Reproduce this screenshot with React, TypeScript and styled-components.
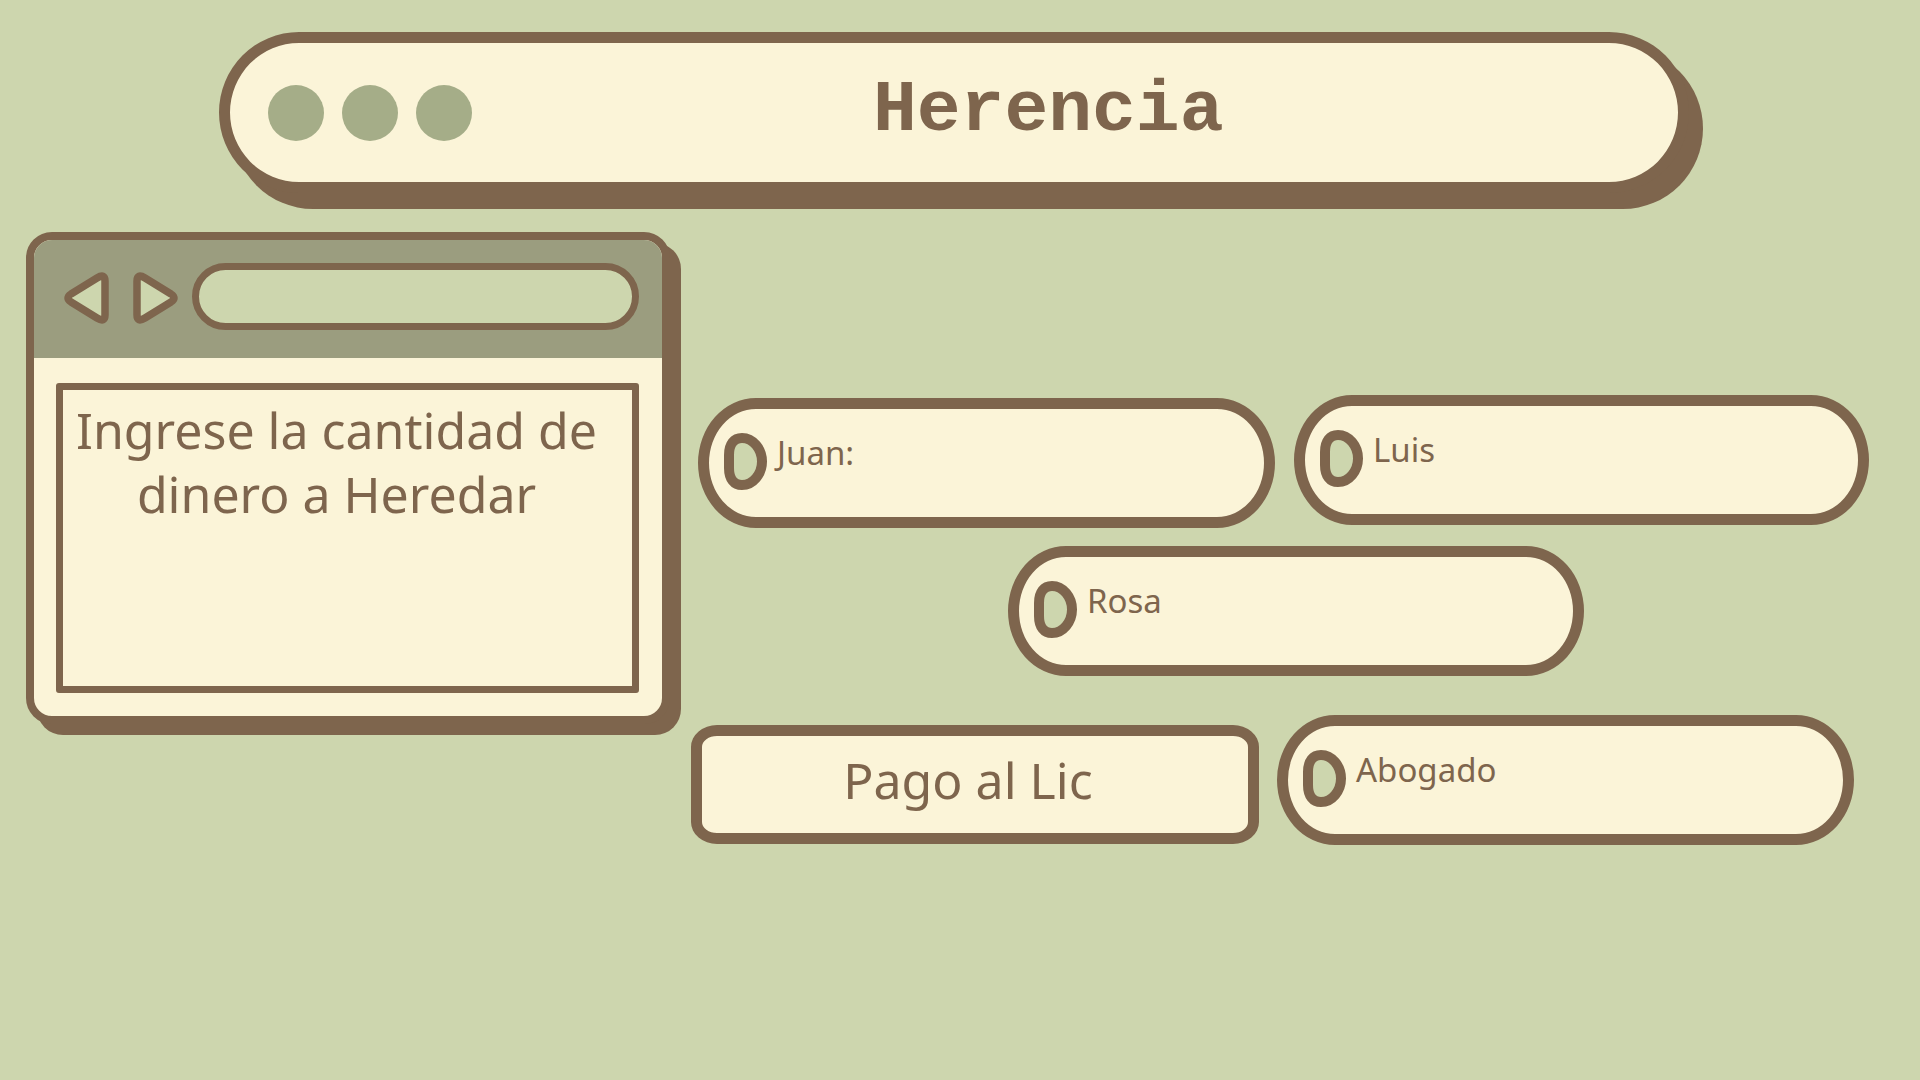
import React from "react";
import styled, { createGlobalStyle } from "styled-components";

const BG = "#cdd6ae";
const BROWN = "#7e654d";
const CREAM = "#fbf4d8";
const DOT = "#a5ad88";
const BAR = "#9b9d7f";

const Global = createGlobalStyle`
  html, body { margin: 0; padding: 0; background: ${BG}; }
  body { font-family: "Noto Sans", "DejaVu Sans", sans-serif; color: ${BROWN}; }
  * { box-sizing: border-box; }
`;

const Page = styled.div`
  width: 1920px;
  height: 1080px;
  overflow: hidden;
  background: ${BG};
  padding-top: 32px;
`;

const TitleBar = styled.header`
  margin-left: 219px;
  width: 1470px;
  height: 161px;
  border: 11px solid ${BROWN};
  border-radius: 80px / 50%;
  background: ${CREAM};
  box-shadow: 14px 16px 0 ${BROWN};
  display: flex;
  align-items: center;
  padding-left: 38px;
`;

const Dots = styled.div`
  display: flex;
  gap: 18px;
`;

const Dot = styled.span`
  width: 56px;
  height: 56px;
  border-radius: 50%;
  background: ${DOT};
`;

const Title = styled.h1`
  margin: -4px 0 0 401px;
  font-family: "Liberation Mono", "Courier New", monospace;
  font-weight: 700;
  font-size: 73px;
  line-height: 1;
  color: ${BROWN};
`;

const Main = styled.main`
  display: flex;
  align-items: flex-start;
  margin-top: 39px;
  padding-left: 26px;
`;

const Window = styled.section`
  width: 644px;
  height: 492px;
  flex: none;
  border: 8px solid ${BROWN};
  border-radius: 26px;
  background: ${CREAM};
  box-shadow: 11px 11px 0 ${BROWN};
  overflow: hidden;
  display: flex;
  flex-direction: column;
`;

const WindowBar = styled.div`
  height: 118px;
  background: ${BAR};
  display: flex;
  align-items: center;
  padding: 0 0 0 28px;
  gap: 22px;
`;

const NavIcon = styled.svg`
  width: 48px;
  height: 58px;
  flex: none;
  margin-top: -3px;
  overflow: visible;
`;

const AddressBar = styled.div`
  width: 447px;
  height: 67px;
  margin-left: -10px;
  margin-top: -5px;
  border: 7px solid ${BROWN};
  border-radius: 34px;
  background: ${BG};
`;

const WindowBody = styled.div`
  flex: 1;
  padding: 25px 23px 23px 22px;
  display: flex;
`;

const Prompt = styled.div`
  flex: 1;
  border: 7px solid ${BROWN};
  border-radius: 3px;
  padding: 8px 22px 0 0;
  font-size: 50px;
  line-height: 64px;
  text-align: center;
  color: ${BROWN};
`;

const Board = styled.div`
  display: flex;
  flex-direction: column;
  padding-top: 163px;
`;

const Row = styled.div<{ $mt?: number }>`
  display: flex;
  align-items: flex-start;
  margin-top: ${(p) => p.$mt ?? 0}px;
`;

const Pill = styled.div<{ $w: number; $ml: number; $mt?: number }>`
  width: ${(p) => p.$w}px;
  height: 130px;
  flex: none;
  margin-left: ${(p) => p.$ml}px;
  margin-top: ${(p) => p.$mt ?? 0}px;
  border: 11px solid ${BROWN};
  border-radius: 58px / 50%;
  background: ${CREAM};
  display: flex;
  align-items: center;
  padding-left: 15px;
  gap: 9px;
`;

const Knob = styled.svg`
  width: 44px;
  height: 57px;
  flex: none;
  margin-top: -4px;
`;

const Label = styled.span`
  font-size: 33px;
  line-height: 1;
  margin-top: -21px;
  color: ${BROWN};
`;

const Button = styled.div<{ $w: number; $ml: number; $mt?: number }>`
  width: ${(p) => p.$w}px;
  height: 119px;
  flex: none;
  margin-left: ${(p) => p.$ml}px;
  margin-top: ${(p) => p.$mt ?? 0}px;
  border: 11px solid ${BROWN};
  border-radius: 26px / 22px;
  background: ${CREAM};
  display: flex;
  align-items: center;
  justify-content: center;
  padding: 0 14px 10px 0;
  font-size: 50px;
  line-height: 1;
  color: ${BROWN};
`;

const KnobIcon = () => (
  <Knob viewBox="0 0 44 57">
    <path
      d="M5 22 C5 11 10 5 18 5 C29 5 38 16 38 28.5 C38 41 29 52 18 52 C10 52 5 46 5 35 Z"
      fill={BG}
      stroke={BROWN}
      strokeWidth="10"
      strokeLinejoin="round"
    />
  </Knob>
);

type PillProps = { label: string; w: number; ml: number; mt?: number };
const NamePill = ({ label, w, ml, mt }: PillProps) => (
  <Pill $w={w} $ml={ml} $mt={mt}>
    <KnobIcon />
    <Label>{label}</Label>
  </Pill>
);

export default function App() {
  return (
    <Page>
      <Global />
      <TitleBar>
        <Dots>
          <Dot />
          <Dot />
          <Dot />
        </Dots>
        <Title>Herencia</Title>
      </TitleBar>
      <Main>
        <Window>
          <WindowBar>
            <NavIcon viewBox="0 0 48 58">
              <path
                d="M43 12 L43 46 Q43 54 35 49 L9 33 Q3 29 9 25 L35 9 Q43 4 43 12 Z"
                fill={BG}
                stroke={BROWN}
                strokeWidth="7.5"
                strokeLinejoin="round"
              />
            </NavIcon>
            <NavIcon viewBox="0 0 48 58">
              <path
                d="M5 12 L5 46 Q5 54 13 49 L39 33 Q45 29 39 25 L13 9 Q5 4 5 12 Z"
                fill={BG}
                stroke={BROWN}
                strokeWidth="7.5"
                strokeLinejoin="round"
              />
            </NavIcon>
            <AddressBar />
          </WindowBar>
          <WindowBody>
            <Prompt>
              Ingrese la cantidad de
              <br />
              dinero a Heredar
            </Prompt>
          </WindowBody>
        </Window>
        <Board>
          <Row>
            <NamePill label="Juan:" w={577} ml={28} mt={3} />
            <NamePill label="Luis" w={575} ml={19} />
          </Row>
          <Row $mt={18}>
            <NamePill label="Rosa" w={576} ml={338} />
          </Row>
          <Row $mt={39}>
            <Button $w={568} $ml={21} $mt={10}>
              Pago al Lic
            </Button>
            <NamePill label="Abogado" w={577} ml={18} />
          </Row>
        </Board>
      </Main>
    </Page>
  );
}
